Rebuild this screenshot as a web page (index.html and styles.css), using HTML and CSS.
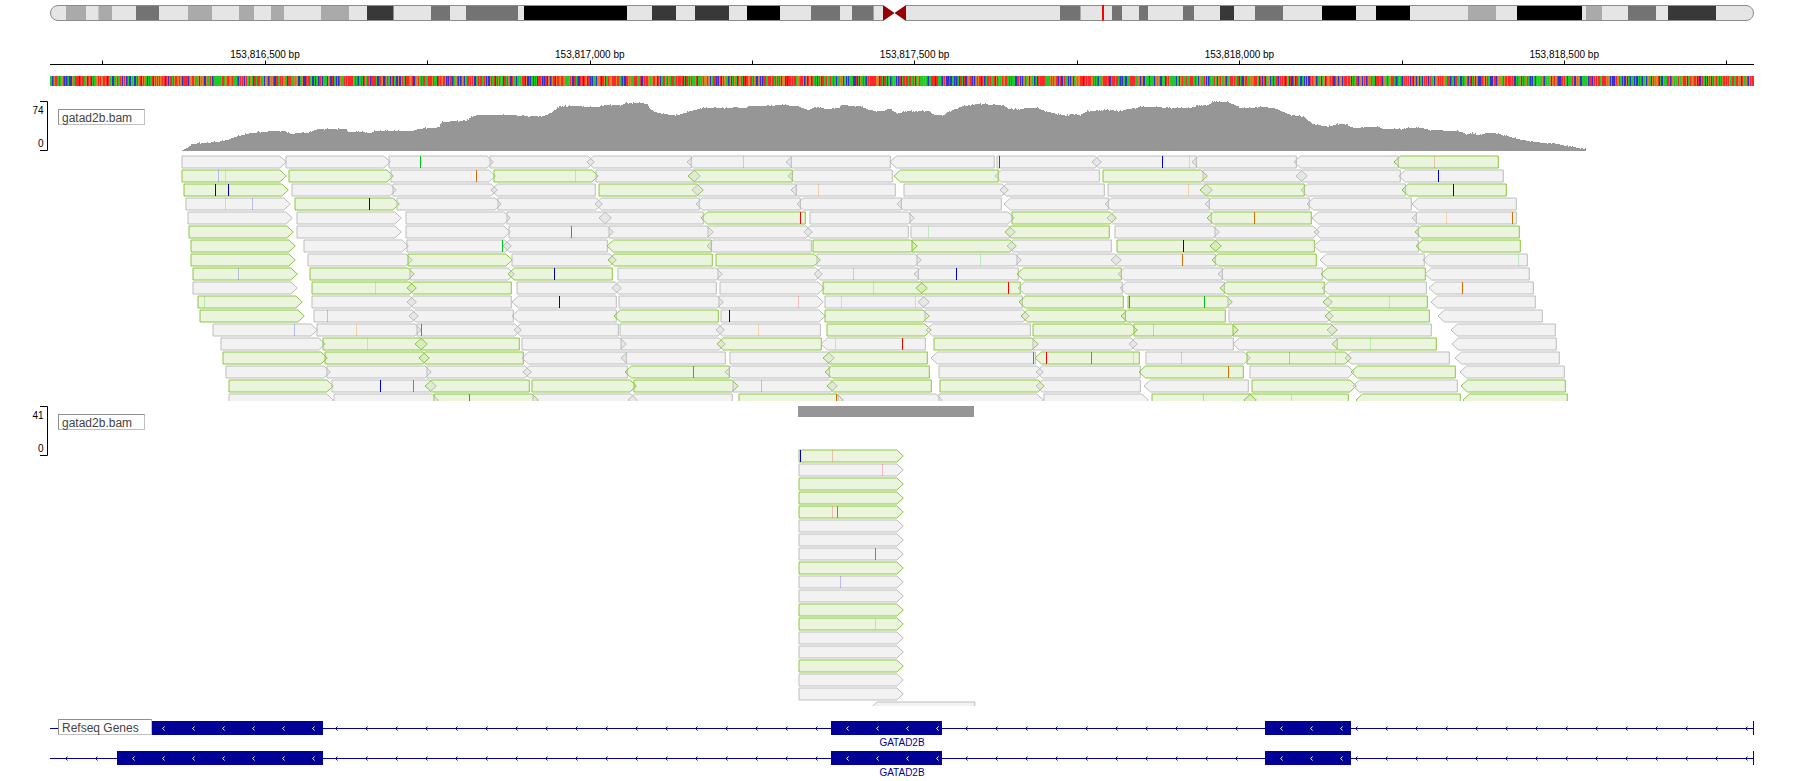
FILE: index.html
```html
<!DOCTYPE html>
<html lang="en">
<head>
<meta charset="utf-8">
<title>Genome browser</title>
<link rel="stylesheet" href="styles.css">
</head>
<body>
<main class="browser">
  <section class="track ideogram"><svg id="ideogram" width="1808" height="40" viewBox="0 0 1808 40"></svg></section>
  <section class="track ruler"><svg id="ruler" width="1808" height="30" viewBox="0 40 1808 30"></svg></section>
  <section class="track sequence"><svg id="sequence" width="1808" height="20" viewBox="0 70 1808 20"></svg></section>
  <section class="track alignment"><svg id="reads-a" width="1808" height="311" viewBox="0 90 1808 311"></svg><div class="track-label label-a">gatad2b.bam</div></section>
  <section class="track alignment"><svg id="reads-b" width="1808" height="305" viewBox="0 401 1808 305"></svg><div class="track-label label-b">gatad2b.bam</div></section>
  <section class="track genes"><svg id="genes" width="1808" height="75" viewBox="0 706 1808 75"></svg><div class="track-label label-c">Refseq Genes</div></section>
</main>
<script src="tracks.js"></script>
</body>
</html>
```
FILE: styles.css
```css
body {
  margin: 0;
  background: #fff;
  font-family: "Liberation Sans", Arial, sans-serif;
  overflow: hidden;
}

.browser {
  display: flex;
  flex-direction: column;
  width: 1808px;
  height: 781px;
}

.track {
  position: relative;
  flex: none;
}

.track svg {
  display: block;
}

.track-label {
  position: absolute;
  left: 58px;
  box-sizing: border-box;
  height: 16px;
  width: 87px;
  padding-left: 3px;
  border: 1px solid #8e8e8e;
  border-right-color: #c0c0c0;
  border-bottom-color: #c0c0c0;
  background: #fff;
  color: #444;
  font-size: 12px;
  line-height: 16px;
  white-space: nowrap;
}

.label-a { top: 19px; }
.label-b { top: 13px; }
.label-c { top: 13px; width: 94px; }

.small { font-size: 10px; fill: #000; }
.middle { text-anchor: middle; }
.end { text-anchor: end; }
.gene-name { fill: #000096; }

.axis { fill: none; stroke: #000; stroke-width: 1; }
.coverage { fill: #969696; }
.gene { fill: #000096; }
.chevron { fill: none; stroke: #000096; stroke-width: 1; }
.chevron-light { fill: none; stroke: #fff; stroke-width: 1; }

.read { stroke-width: 1; fill: #b7b7b7; fill-opacity: .18; stroke: #bdbdbd; }
.read.green { fill: #90c23d; stroke: #8cc63f; }
```
FILE: tracks.js
```js
const put = (id, markup) => { document.getElementById(id).innerHTML = markup; };

/* Chromosome bands: start, end, shade */
const A = '#aaaaaa', M = '#737373', D = '#383838', K = '#000000';
const bands = [
  [66, 86, A], [98.5, 112, A], [136, 159, M], [188, 212, A], [239, 254, A], [271, 284, A],
  [321, 349, A], [367, 393.5, D], [431, 450, M], [466, 518, M], [524, 627, K], [652, 676, D],
  [695, 729, D], [747, 780, K], [811, 840, M], [852, 873.6, M], [1060, 1080.5, M],
  [1112, 1122, M], [1139, 1148, M], [1183, 1194, M], [1220, 1234, D], [1255, 1283, M],
  [1322, 1356, K], [1376, 1410, K], [1468, 1496, A], [1517, 1582, K], [1586, 1602, A],
  [1628, 1656, M], [1668, 1716, D]
];
put('ideogram',
  '<rect x="50.5" y="5.5" width="1703" height="15" rx="7.5" fill="#e5e5e5"/>' +
  bands.map(b => `<rect x="${b[0]}" y="6" width="${b[1] - b[0]}" height="14" fill="${b[2]}"/>`).join('') +
  '<rect x="50.5" y="5.5" width="1703" height="15" rx="7.5" fill="none" stroke="#8c8c8c"/>' +
  '<rect x="883" y="5" width="23" height="16" fill="#fff"/>' +
  '<path d="M883 5L894.5 13L883 21ZM906 5L894.5 13L906 21Z" fill="#960000"/>' +
  '<rect x="1102" y="5" width="2" height="15.5" fill="#f00"/>');

/* Ruler */
let ruler = '<path class="axis" d="M50 64.5H1754"/>';
for (let i = 0; i < 11; i++) {
  const x = Math.round(102.4 + i * 162.4) + .5;
  ruler += `<path class="axis" d="M${x} 60.5V64"/>`;
}
['153,816,500', '153,817,000', '153,817,500', '153,818,000', '153,818,500'].forEach((t, i) => {
  ruler += `<text class="small middle" x="${265 + i * 324.8}" y="58">${t} bp</text>`;
});
put('ruler', ruler);

/* Bases */
let seed = 71;
const rand = () => (seed = (seed * 16807) % 2147483647) / 2147483647;
const bases = { '#1ecc28': '', '#ff2828': '', '#3232d2': '', '#d88628': '' };
const names = Object.keys(bases);
for (let x = 50; x < 1754; x++) {
  const r = rand();
  bases[names[r < .34 ? 0 : r < .64 ? 1 : r < .81 ? 2 : 3]] += `M${x} 76h1v10h-1z`;
}
put('sequence', names.map(c => `<path fill="${c}" d="${bases[c]}"/>`).join(''));

/* One read is "<strand><x>", with a trailing g for green ones */
const LEN = 104.3, TIP = 6.5, H = 12;
function read(code, y) {
  const green = code.endsWith('g');
  const x = parseFloat(code.slice(1));
  const e = x + LEN;
  const d = code[0] === 'R'
    ? `M${x} ${y}H${e - TIP}L${e} ${y + H / 2}L${e - TIP} ${y + H}H${x}Z`
    : `M${e} ${y}H${x + TIP}L${x} ${y + H / 2}L${x + TIP} ${y + H}H${e}Z`;
  return `<path class="read${green ? ' green' : ''}" d="${d}"/>`;
}

/* Mismatches: x followed by a base; a lower-case base has a low quality */
const colors = {
  A: '#00c31e', a: '#00c80038', T: '#ff0000', t: '#ff000038',
  C: '#0000c8', c: '#0000ff38', G: '#d17105', g: '#e6820048'
};
function mismatch(code, y) {
  const b = code.slice(-1);
  return `<rect x="${parseInt(code, 10)}" y="${y}" width="1" height="${H}" fill="${colors[b]}"/>`;
}

function rows(list, top) {
  return list.map(([reads, marks], i) => {
    const y = top + i * 14;
    return reads.split(' ').map(r => read(r, y)).join('') +
      (marks ? marks.split(' ').map(m => mismatch(m, y)).join('') : '');
  }).join('');
}

const rowsA = [
  ['R182 R286 R389 R490 L587 L687 L786 L890 R997 L1092 L1192 L1294 L1394g', '420A 743t 999T 1162C 1189a 1434t'],
  ['R182g R289g R391 R494g R596 L688g L788 L894g L995 R1103g R1203 L1296 L1399', '218c 225g 476G 575a 1438C'],
  ['R184g R292 R393 L491 R599g L692 L791 R904 L1000 R1108 L1200g L1301 L1402g', '215C 228C 818g 1188g 1453C'],
  ['R186 R295g R397 R498 L595 L696 L797 L897 L1004 L1105 L1205 L1307 L1412', '225g 252c 369C'],
  ['R188 R297 R406 R507 L599 L701g R810 R910 R1012g L1107 L1207g L1312 L1412', '800T 1254G 1446g 1512G'],
  ['R189g R297 R406 R509 R609 R708 L804 R911 L1005g R1115 R1215 L1314 L1415g', '571A 928a'],
  ['R191g R304 R407 L503 L607g L707 R813g R912g L1007 R1117g L1210g L1314 L1416g', '502A 1183C'],
  ['R191g R308 R408g R512 L608g R716g R817 R917 R1017 L1111 L1212g L1320 L1423', '980a 1182G 1518a'],
  ['R193g R310g R410 L508g R618 R718 L814 L914 L1017g L1118 L1218 L1321g L1425', '238c 554C 853t 956C'],
  ['R193 R312g L407g R517 L612 R720 R823g L916g L1018 L1120 L1220g L1322 L1429', '375a 873a 1008T 1462G'],
  ['R198g R312 L407 L512 R619 R719 R825 L918 L1019g R1128g R1228 L1323g L1431', '204a 559C 798t 841a 915a 1129A 1204A 1389g'],
  ['R200g R314 L409 L512 L614g R721 R825g R925 L1021g L1121g R1229 L1325g L1438', '327c 729C'],
  ['R213 R317 R417 L514 R620 L716 R827g L926 R1033g R1134g R1233g L1327 L1451', '294c 356g 421A 758g 1153t'],
  ['R221 R323g L415g R522 R621 L717g L821 R934g R1033 L1129 L1233 L1332g L1452', '367a 835g 902T 1370a'],
  ['R223g R325g L419g L522 L621 R730 L823g L931 L1035g R1146 R1247g L1345 L1455', '1033A 1046T 1091G 1133g 1181t 1289c 1335a'],
  ['R226 R327 R427 L523 L625g L725 L825g R939 L1036 L1139g R1250 L1351g L1460', '693G 1228G'],
  ['R229g R332 L425g R532g R634g R733 L827g R940g L1036 L1144 R1252g L1353 L1461g', '380C 413G 761c'],
  ['R229 R334 R434g R533 L628 R739g R838 R939 R1044 R1152g L1244g L1356g L1463g', '469A 836G 1203t 1291a']
];

/* Depth profile: x, top of the column */
const depth = [
  182, 150, 186, 148, 193, 144, 200, 143, 215, 142.3, 223, 141, 230, 139, 238, 136, 250, 133,
  263, 132, 273, 131, 283, 131, 291, 134.3, 297, 133, 308, 132.7, 316, 129.5, 332, 128.7,
  346, 129.5, 348, 131.5, 370, 132.7, 374, 131.3, 389, 131, 413, 130.5, 419, 128.7, 439, 127.3,
  441, 122.5, 451, 121.3, 466, 120.7, 469, 118, 476, 115, 486, 114.7, 514, 114.7, 518, 116,
  542, 116.3, 549, 114, 556, 109, 560, 106, 573, 106, 585, 106.7, 597, 107, 605, 105, 620, 105.5,
  626, 103, 640, 103, 647, 104, 649, 107, 653, 111.3, 659, 113.3, 675, 115.5, 681, 114, 691, 111,
  697, 109, 709, 107.7, 726, 108.3, 734, 107.3, 746, 108, 748, 106.3, 774, 105.5, 780, 104.7,
  798, 106.3, 808, 110, 815, 107, 827, 109, 839, 107.7, 841, 105, 859, 106.3, 873, 111, 883, 111,
  889, 108.7, 897, 113.7, 905, 111.3, 928, 111, 934, 115, 942, 115.5, 948, 111.7, 962, 106.3,
  978, 104, 1003, 105.3, 1007, 108.3, 1019, 109.7, 1025, 108, 1037, 107.7, 1041, 110, 1053, 113.3,
  1066, 115.7, 1071, 113.7, 1080, 115, 1086, 111.3, 1110, 110, 1118, 111, 1140, 107, 1154, 106.7,
  1167, 108, 1189, 108, 1197, 106, 1208, 105, 1212, 102, 1227, 102, 1235, 105, 1239, 107.7,
  1252, 108.3, 1256, 107, 1274, 107.7, 1280, 111, 1291, 115, 1304, 117, 1312, 124, 1328, 126.7,
  1334, 124.7, 1343, 123.7, 1353, 127.7, 1378, 127, 1382, 128.7, 1402, 129, 1411, 127.7,
  1423, 128, 1429, 130, 1456, 131, 1462, 132, 1466, 134.7, 1471, 133, 1477, 135, 1489, 132.7,
  1499, 134, 1508, 136.7, 1522, 140, 1541, 142.7, 1555, 143.3, 1564, 145.7, 1586, 149
];
let area = 'M182 151', k = 0;
for (let x = 182; x < 1586; x++) {
  while (depth[k + 2] <= x) k += 2;
  const f = (x - depth[k]) / (depth[k + 2] - depth[k]);
  const y = depth[k + 1] + f * (depth[k + 3] - depth[k + 1]);
  const r = rand();
  const step = Math.round(y + (r < .1 ? -.9 : r < .2 ? .6 : 0));
  area += `V${step}h1`;
}
area += 'V151Z';

const axis = (y, max) =>
  `<path class="axis" d="M40 ${y}.5H47.5V${y + 49}.5H40"/>` +
  `<text class="small end" x="43.5" y="${y + 13}">${max}</text>` +
  `<text class="small end" x="43.5" y="${y + 46}">0</text>`;

put('reads-a', axis(101, 74) + `<path class="coverage" d="${area}"/>` + rows(rowsA, 156));

const rowsB = [
  ['R799g', '800C 832t'], ['R799', '882t'], ['R799g'], ['R799g'], ['R799g', '832t 837G'],
  ['R799'], ['R799'], ['R799', '875G'], ['R799g'], ['R799', '840c'], ['R799'], ['R799g'],
  ['R799g', '875g'], ['R799'], ['R799'], ['R799g'], ['R799'], ['R799'], ['L870.5']
];
put('reads-b', axis(406, 41) + '<rect class="coverage" x="798" y="406" width="176" height="11"/>' + rows(rowsB, 450));

/* Transcripts */
const exons = [[117, 323], [831, 942], [1265, 1351]];
const within = x => exons.find(e => x >= e[0] && x <= e[1]);
let genes = '';
for (const y of [721, 751]) {
  const c = y + 7.5;
  const chevron = (x, cls) => `<path class="${cls}" d="M${x + 1.5} ${c - 2}L${x - .3} ${c}L${x + 1.5} ${c + 2}"/>`;
  genes += `<rect class="gene" x="50" y="${y + 7}" width="1704" height="1"/><rect class="gene" x="1753" y="${y}" width="1" height="14"/>`;
  for (let x = 66; x < 1750; x += 30) if (!within(x)) genes += chevron(x, 'chevron');
  for (const [a, b] of exons) {
    genes += `<rect class="gene" x="${a}" y="${y}" width="${b - a}" height="14"/>`;
    for (let x = a + 16; x < b; x += 30) genes += chevron(x, 'chevron-light');
  }
  genes += `<text class="small middle gene-name" x="902" y="${y + 25}">GATAD2B</text>`;
}
put('genes', genes);
```
